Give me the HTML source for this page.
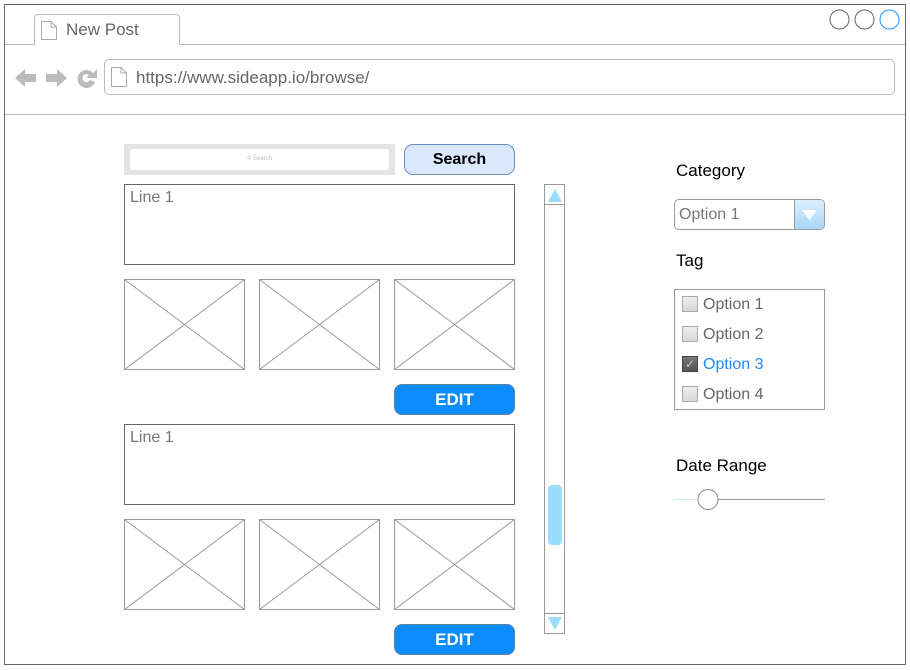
<!DOCTYPE html>
<html><head><style>
*{box-sizing:border-box;margin:0;padding:0}
body{width:910px;height:670px;background:#fff;font-family:"Liberation Sans",Arial,sans-serif;position:relative;overflow:hidden}
.a{position:absolute}
.edit{position:absolute;width:121px;height:31px;background:#0b8cff;border:1px solid #5a7fa5;border-radius:8px;color:#fff;font-weight:bold;font-size:17px;text-align:center;line-height:29px}
.line{position:absolute;width:391px;height:81px;border:1px solid #666;color:#777;font-size:16px;padding:4px 5px}
.cb{position:absolute;left:7px;width:16px;height:16px;border:1px solid #aaa;background:linear-gradient(#eee,#d8d8d8)}
.opt{position:absolute;left:28px;font-size:16px;color:#666}
</style></head><body>
<div class="a" style="left:4px;top:4px;width:902px;height:661px;border:1px solid #666"></div>
<div class="a" style="left:5px;top:44px;width:900px;height:1px;background:#bbb"></div>
<div class="a" style="left:5px;top:114px;width:900px;height:1px;background:#bbb"></div>
<div class="a" style="left:34px;top:14px;width:146px;height:31px;border:1px solid #bbb;border-bottom:none;border-radius:4px 4px 0 0;background:#fff"></div>
<svg class="a" style="left:40px;top:20px" width="18" height="21"><path d="M1.5 1.5H11L16.5 7V19.5H1.5Z M11 1.5V7H16.5" fill="#fff" stroke="#aaa"/></svg>
<div class="a" style="left:66px;top:20px;font-size:17px;color:#666">New Post</div>
<svg class="a" style="left:829px;top:9px" width="72" height="22"><circle cx="10.5" cy="10.5" r="9.5" fill="none" stroke="#666"/><circle cx="35.5" cy="10.5" r="9.5" fill="none" stroke="#666"/><circle cx="60.5" cy="10.5" r="9.5" fill="none" stroke="#1e90ff"/></svg>
<svg class="a" style="left:14px;top:66px" width="86" height="24"><path d="M1 12L11 3V8H22V16H11V21Z" fill="#bbb"/><path d="M53 12L43 3V8H32V16H43V21Z" fill="#bbb"/><path d="M80 8A9 9 0 1 0 81 16L76 14A4 4 0 1 1 75 9L72 12H83V3L80 6Z" fill="#bbb"/></svg>
<div class="a" style="left:104px;top:59px;width:791px;height:36px;border:1px solid #bbb;border-radius:5px"></div>
<svg class="a" style="left:110px;top:66px" width="18" height="22"><path d="M1.5 1.5H11L16.5 7V20.5H1.5Z M11 1.5V7H16.5" fill="#fff" stroke="#aaa"/></svg>
<div class="a" style="left:136px;top:68px;font-size:17px;color:#666">https://www.sideapp.io/browse/</div>

<div class="a" style="left:124px;top:144px;width:271px;height:31px;background:#e4e4e4"></div>
<div class="a" style="left:130px;top:149px;width:259px;height:21px;background:#fff;border-radius:3px;font-size:6px;color:#bbb;text-align:center;line-height:21px">&#9906; Search</div>
<div class="a" style="left:404px;top:144px;width:111px;height:31px;background:#dae8fc;border:1px solid #6c8ebf;border-radius:9px;font-weight:bold;font-size:16px;text-align:center;line-height:29px">Search</div>

<div class="line" style="left:124px;top:184px">Line 1</div>
<div class="line" style="left:124px;top:424px">Line 1</div>
<svg class="a" style="left:0;top:0" width="910" height="670" fill="none" stroke="#999">
<g id="r"><rect x="124.5" y="279.5" width="120" height="90"/><path d="M124.5 279.5L244.5 369.5M244.5 279.5L124.5 369.5"/>
<rect x="259.5" y="279.5" width="120" height="90"/><path d="M259.5 279.5L379.5 369.5M379.5 279.5L259.5 369.5"/>
<rect x="394.5" y="279.5" width="120" height="90"/><path d="M394.5 279.5L514.5 369.5M514.5 279.5L394.5 369.5"/></g>
<use href="#r" y="240"/>
<rect x="544.5" y="184.5" width="20" height="449"/><path d="M544.5 204.5H564.5M544.5 613.5H564.5"/>
</svg>
<div class="edit" style="left:394px;top:384px">EDIT</div>
<div class="edit" style="left:394px;top:624px">EDIT</div>
<svg class="a" style="left:546px;top:186px" width="18" height="446"><path d="M2 16L9 3L16 16Z" fill="#99ddff"/><path d="M2 431L9 444L16 431Z" fill="#99ddff"/><rect x="2" y="299" width="14" height="60" rx="4" fill="#99ddff"/></svg>

<div class="a" style="left:676px;top:161px;font-size:17px">Category</div>
<div class="a" style="left:674px;top:199px;width:151px;height:31px;border:1px solid #999;border-radius:5px;overflow:hidden">
<div class="a" style="left:4px;top:6px;font-size:16px;color:#777">Option 1</div>
<div class="a" style="right:0;top:0;width:30px;height:29px;background:linear-gradient(#dbefff,#a7d6fa);border-left:1px solid #999"></div>
<svg class="a" style="right:6px;top:9px" width="17" height="12"><path d="M1 1H16L8.5 11Z" fill="#fff"/></svg>
</div>
<div class="a" style="left:676px;top:251px;font-size:17px">Tag</div>
<div class="a" style="left:674px;top:289px;width:151px;height:121px;border:1px solid #999">
<div class="cb" style="top:6px"></div><div class="opt" style="top:6px">Option 1</div>
<div class="cb" style="top:36px"></div><div class="opt" style="top:36px">Option 2</div>
<div class="cb" style="top:66px;background:linear-gradient(#777,#555);border-color:#444;color:#ccc;font-size:12px;line-height:14px;text-align:center">✓</div><div class="opt" style="top:66px;color:#1a8cff">Option 3</div>
<div class="cb" style="top:96px"></div><div class="opt" style="top:96px">Option 4</div>
</div>
<div class="a" style="left:676px;top:456px;font-size:17px">Date Range</div>
<svg class="a" style="left:672px;top:486px" width="156" height="26"><path d="M2 13.5H30" stroke="#cce6ff"/><path d="M30 13.5H153" stroke="#999"/><circle cx="36" cy="13.5" r="10" fill="#fff" stroke="#888"/></svg>
</body></html>
